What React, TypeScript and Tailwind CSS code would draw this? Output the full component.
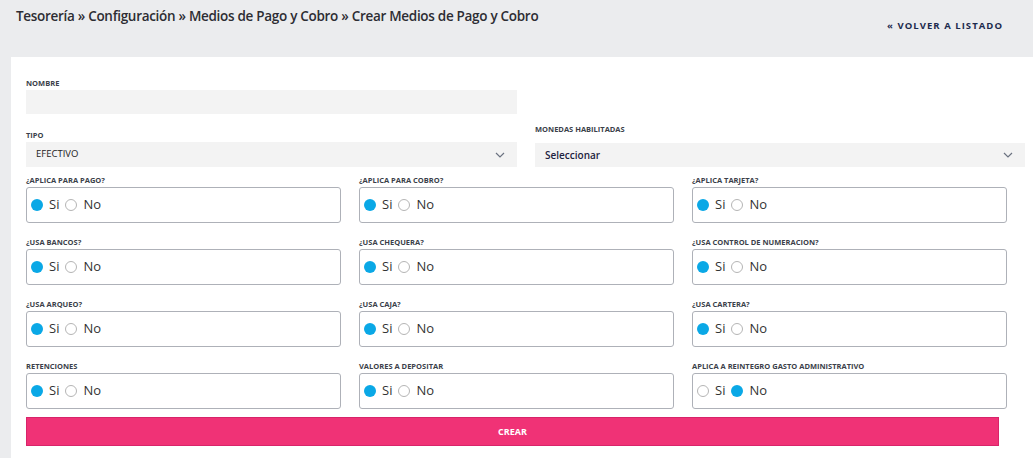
import React from "react";

type Pregunta = { label: string; value: "si" | "no" };

const preguntas: Pregunta[] = [
  { label: "¿APLICA PARA PAGO?", value: "si" },
  { label: "¿APLICA PARA COBRO?", value: "si" },
  { label: "¿APLICA TARJETA?", value: "si" },
  { label: "¿USA BANCOS?", value: "si" },
  { label: "¿USA CHEQUERA?", value: "si" },
  { label: "¿USA CONTROL DE NUMERACION?", value: "si" },
  { label: "¿USA ARQUEO?", value: "si" },
  { label: "¿USA CAJA?", value: "si" },
  { label: "¿USA CARTERA?", value: "si" },
  { label: "RETENCIONES", value: "si" },
  { label: "VALORES A DEPOSITAR", value: "si" },
  { label: "APLICA A REINTEGRO GASTO ADMINISTRATIVO", value: "no" },
];

const Chevron = () => (
  <svg width="10" height="6" viewBox="0 0 10 6" fill="none">
    <path d="M1 1l4 4 4-4" stroke="#6b7280" strokeWidth="1.2" />
  </svg>
);

const Radio = ({ checked }: { checked: boolean }) =>
  checked ? (
    <span className="inline-block w-[12px] h-[12px] rounded-full bg-[#0aa8e6]" />
  ) : (
    <span className="inline-block w-[12px] h-[12px] rounded-full border border-[#b5b5b5] bg-white" />
  );

const Label = ({ children }: { children: React.ReactNode }) => (
  <p className="text-[7.5px] leading-[10px] font-bold text-[#3b3f4a] tracking-[0px]">
    {children}
  </p>
);

export default function App() {
  return (
    <div
      className="min-h-[458px] bg-[#ebecee]"
      style={{ fontFamily: '"Open Sans", "Noto Sans", sans-serif' }}
    >
      <div className="flex justify-between h-[57px] pl-[16px] pr-[30px]">
        <h1 className="pt-[6px] text-[13.5px] leading-[20px] font-semibold text-[#2d2d33] tracking-[-0.3px]">
          Tesorería » Configuración » Medios de Pago y Cobro » Crear Medios de Pago y Cobro
        </h1>
        <a className="pt-[20px] text-[9.5px] leading-[12px] font-bold tracking-[1.05px] text-[#1c2a4d]">
          « VOLVER A LISTADO
        </a>
      </div>

      <div className="ml-[11px] bg-white pl-[15px] pt-[21px] pb-[20px]">
        <Label>NOMBRE</Label>
        <div className="mt-[2px] w-[491px] h-[24px] bg-[#f3f3f3]" />

        <div className="flex items-end gap-[18px]">
          <div className="w-[491px]">
            <div className="mt-[16px]">
              <Label>TIPO</Label>
            </div>
            <div className="mt-[2px] h-[25px] bg-[#f3f3f3] flex items-center justify-between pl-[10px] pr-[12px]">
              <span className="text-[9.5px] text-[#222]">EFECTIVO</span>
              <Chevron />
            </div>
          </div>
          <div className="w-[490px]">
            <Label>MONEDAS HABILITADAS</Label>
            <div className="mt-[9px] h-[24px] bg-[#f3f3f3] flex items-center justify-between pl-[10px] pr-[12px]">
              <span className="text-[10px] font-semibold text-[#1d2340]">Seleccionar</span>
              <Chevron />
            </div>
          </div>
        </div>

        <div className="mt-[8px] grid grid-cols-[315px_315px_315px] gap-x-[18px] gap-y-[14px]">
          {preguntas.map((p) => (
            <div key={p.label}>
              <Label>{p.label}</Label>
              <div className="mt-[2px] h-[36px] rounded-[3px] border border-[#aeb1b8] flex items-center pl-[4px] text-[13px] text-[#333]">
                <Radio checked={p.value === "si"} />
                <span className="ml-[6px]">Si</span>
                <span className="ml-[6px] flex items-center">
                  <Radio checked={p.value === "no"} />
                </span>
                <span className="ml-[6px]">No</span>
              </div>
            </div>
          ))}
        </div>

        <button className="mt-[8px] w-[973px] h-[29px] bg-[#f03276] border border-[#d8246a] text-white text-[9px] font-bold">
          CREAR
        </button>
      </div>
    </div>
  );
}
